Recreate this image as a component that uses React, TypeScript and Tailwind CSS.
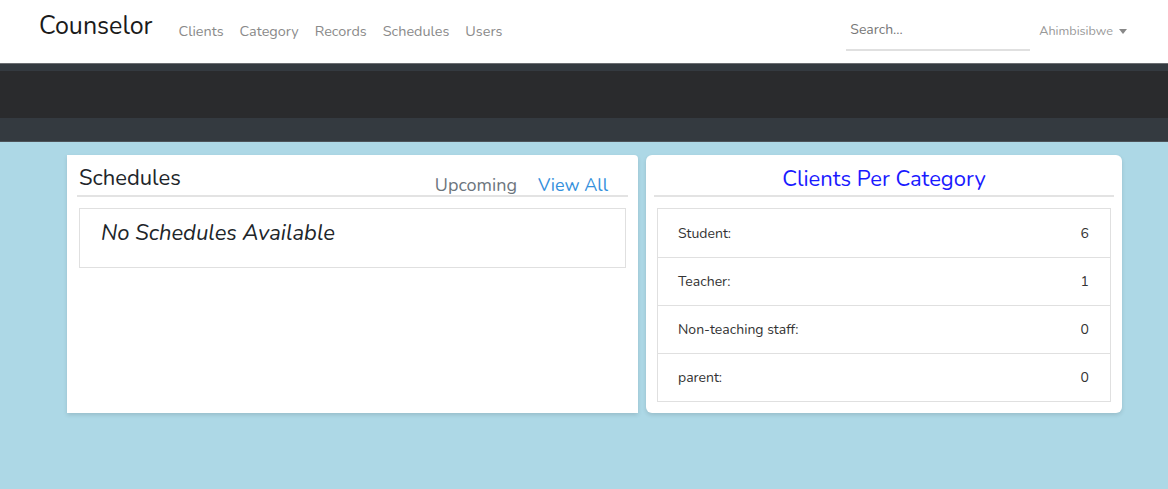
import { ReactNode } from 'react'

const font = { fontFamily: 'Nunito, "Open Sans", "Noto Sans", sans-serif' }

const categories = [
  { name: 'Student:', count: 6 },
  { name: 'Teacher:', count: 1 },
  { name: 'Non-teaching staff:', count: 0 },
  { name: 'parent:', count: 0 },
]

function Card({ children, className = '' }: { children: ReactNode; className?: string }) {
  return (
    <div className={`bg-white shadow-[0_2px_4px_rgba(0,0,0,0.12)] ${className}`}>{children}</div>
  )
}

export default function App() {
  return (
    <div className="min-h-[489px] bg-[#add8e6] text-[#212529]" style={font}>
      {/* Navbar */}
      <nav className="h-[64px] bg-white flex items-center pl-[39px] pr-[41px] border-b border-[#6b6e72]">
        <span className="text-[25px] text-[#1a1a1a] leading-none -mt-[10px]">Counselor</span>
        <div className="flex items-center gap-[16px] ml-[26px] text-[14.4px] text-[#8a8a8a]">
          <span>Clients</span>
          <span>Category</span>
          <span>Records</span>
          <span>Schedules</span>
          <span>Users</span>
        </div>
        <div className="ml-auto flex items-center">
          <div className="w-[184px] h-[39px] border-b-2 border-[#e0e0e0] flex items-center pl-[4px] text-[14px] text-[#777]">
            <span className="-mt-[3px]">Search...</span>
          </div>
          <div className="ml-[9px] flex items-center text-[12.6px] text-[#999] gap-[6px]">
            <span>Ahimbisibwe</span>
            <span className="border-x-[4px] border-x-transparent border-t-[5px] border-t-[#888] w-0 h-0" />
          </div>
        </div>
      </nav>

      {/* Dark header bands */}
      <div className="h-[7px] bg-[#343a40]" />
      <div className="h-[47px] bg-[#2a2b2d]" />
      <div className="h-[24px] bg-[#343a40] border-b border-[#4d5359]" />

      {/* Content */}
      <div className="flex gap-[8px] pl-[67px] pt-[13px]">
        <Card className="w-[571px] h-[258px] rounded-tr-[4px] px-[10px] pt-[9px]">
          <div className="flex items-end border-b-2 border-[#e3e3e3] pl-[2px] pr-[20px]">
            <span className="text-[22px] leading-[28px] pb-[3px]">Schedules</span>
            <span className="ml-auto text-[18px] text-[#6c757d] leading-[20px]">Upcoming</span>
            <span className="ml-[21px] text-[18px] text-[#3490dc] leading-[20px]">View All</span>
          </div>
          <div className="mt-[11px] ml-[2px] mr-[2px] h-[60px] border border-[#e0e0e0] pl-[21px] pt-[10px]">
            <span className="italic text-[22px] leading-[28px]">No Schedules Available</span>
          </div>
        </Card>

        <Card className="w-[476px] h-[258px] rounded-[6px] px-[8px] pt-[10px]">
          <div className="border-b-2 border-[#e3e3e3] text-center text-[22px] leading-[29px] text-[#1a1aff] pb-[1px]">
            Clients Per Category
          </div>
          <div className="mt-[11px] mx-[3px] border border-[#e0e0e0]">
            {categories.map((c, i) => (
              <div
                key={c.name}
                className={`h-[48px] flex items-center justify-between pl-[20px] pr-[21px] text-[14px] text-[#333] ${
                  i > 0 ? 'border-t border-[#e0e0e0]' : ''
                }`}
              >
                <span>{c.name}</span>
                <span>{c.count}</span>
              </div>
            ))}
          </div>
        </Card>
      </div>
    </div>
  )
}
